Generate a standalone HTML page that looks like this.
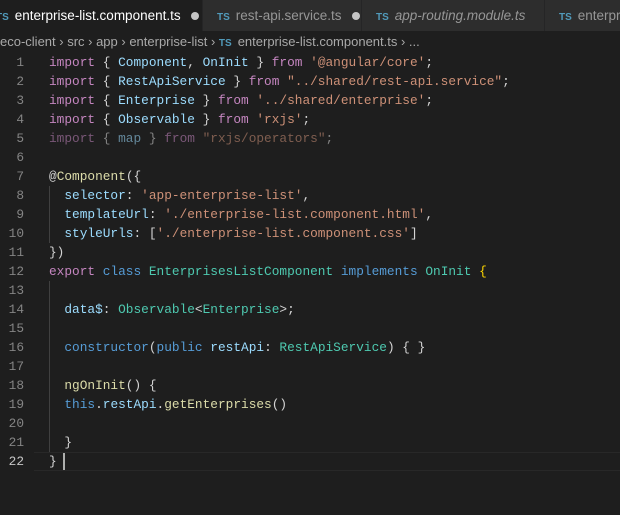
<!DOCTYPE html>
<html><head><meta charset="utf-8"><style>
body{margin:0;width:620px;height:515px;background:#1e1e1e;overflow:hidden;font-family:"Liberation Sans",sans-serif;}
.tabs{position:absolute;left:0;top:0;width:620px;height:31px;background:#252526;}
.tab{position:absolute;top:0;height:31px;background:#2d2d2d;color:#969696;font-size:13.5px;line-height:31px;white-space:nowrap;overflow:hidden;}
.tab.active{background:#1e1e1e;color:#fff;}
.ts{color:#519aba;font-size:10px;font-weight:bold;margin-right:6px;}
.dot{display:inline-block;width:8px;height:8px;border-radius:50%;background:#c5c5c5;margin-left:10px;vertical-align:0px;}
.bc{position:absolute;left:0;top:31px;height:22px;line-height:22px;color:#a9a9a9;font-size:13px;white-space:nowrap;}
.code{position:absolute;left:0;top:53px;font-family:"Liberation Mono",monospace;font-size:12.8px;}
.ln{position:relative;height:19px;line-height:19px;white-space:pre;}
.num{position:absolute;left:0;width:24px;text-align:right;color:#858585;}
.num.cur{color:#c6c6c6;}
.txt{position:absolute;left:49px;color:#d4d4d4;}
.k{color:#c586c0}.v{color:#9cdcfe}.s{color:#ce9178}.c{color:#4ec9b0}.b{color:#569cd6}.f{color:#dcdcaa}.y{color:#ffd700}
.dim{opacity:.55}
.guide{position:absolute;left:49px;width:1px;background:#404040;}
.curline{position:absolute;left:34px;right:0;top:452px;height:17px;border-top:1px solid #282828;border-bottom:1px solid #282828;}
.caret{position:absolute;left:63px;top:453px;width:2px;height:17px;background:#aeafad;}
</style></head><body>
<div class="tabs">
<div class="tab active" style="left:0;width:202px;"><span style="margin-left:-4px" class="ts">TS</span>enterprise-list.component.ts<span class="dot"></span></div>
<div class="tab" style="left:203px;width:158px;padding-left:14px;box-sizing:border-box"><span class="ts">TS</span>rest-api.service.ts<span class="dot"></span></div>
<div class="tab" style="left:362px;width:182px;padding-left:14px;box-sizing:border-box"><span class="ts">TS</span><i>app-routing.module.ts</i></div>
<div class="tab" style="left:545px;width:80px;padding-left:14px;box-sizing:border-box"><span class="ts">TS</span>enterprise-list</div>
</div>
<div class="bc">eco-client › src › app › enterprise-list › <span class="ts">TS</span>enterprise-list.component.ts › ...</div>
<div class="curline"></div>
<div class="guide" style="top:186px;height:57px"></div>
<div class="guide" style="top:281px;height:171px"></div>
<div class="caret"></div>
<div class="code">
<div class="ln"><span class="num">1</span><span class="txt"><span class="k">import</span> { <span class="v">Component</span>, <span class="v">OnInit</span> } <span class="k">from</span> <span class="s">'@angular/core'</span>;</span></div>
<div class="ln"><span class="num">2</span><span class="txt"><span class="k">import</span> { <span class="v">RestApiService</span> } <span class="k">from</span> <span class="s">"../shared/rest-api.service"</span>;</span></div>
<div class="ln"><span class="num">3</span><span class="txt"><span class="k">import</span> { <span class="v">Enterprise</span> } <span class="k">from</span> <span class="s">'../shared/enterprise'</span>;</span></div>
<div class="ln"><span class="num">4</span><span class="txt"><span class="k">import</span> { <span class="v">Observable</span> } <span class="k">from</span> <span class="s">'rxjs'</span>;</span></div>
<div class="ln"><span class="num">5</span><span class="txt dim"><span class="k">import</span> { <span class="v">map</span> } <span class="k">from</span> <span class="s">"rxjs/operators"</span>;</span></div>
<div class="ln"><span class="num">6</span></div>
<div class="ln"><span class="num">7</span><span class="txt">@<span class="f">Component</span>({</span></div>
<div class="ln"><span class="num">8</span><span class="txt">  <span class="v">selector</span>: <span class="s">'app-enterprise-list'</span>,</span></div>
<div class="ln"><span class="num">9</span><span class="txt">  <span class="v">templateUrl</span>: <span class="s">'./enterprise-list.component.html'</span>,</span></div>
<div class="ln"><span class="num">10</span><span class="txt">  <span class="v">styleUrls</span>: [<span class="s">'./enterprise-list.component.css'</span>]</span></div>
<div class="ln"><span class="num">11</span><span class="txt">})</span></div>
<div class="ln"><span class="num">12</span><span class="txt"><span class="k">export</span> <span class="b">class</span> <span class="c">EnterprisesListComponent</span> <span class="b">implements</span> <span class="c">OnInit</span> <span class="y">{</span></span></div>
<div class="ln"><span class="num">13</span></div>
<div class="ln"><span class="num">14</span><span class="txt">  <span class="v">data$</span>: <span class="c">Observable</span>&lt;<span class="c">Enterprise</span>&gt;;</span></div>
<div class="ln"><span class="num">15</span></div>
<div class="ln"><span class="num">16</span><span class="txt">  <span class="b">constructor</span>(<span class="b">public</span> <span class="v">restApi</span>: <span class="c">RestApiService</span>) { }</span></div>
<div class="ln"><span class="num">17</span></div>
<div class="ln"><span class="num">18</span><span class="txt">  <span class="f">ngOnInit</span>() {</span></div>
<div class="ln"><span class="num">19</span><span class="txt">  <span class="b">this</span>.<span class="v">restApi</span>.<span class="f">getEnterprises</span>()</span></div>
<div class="ln"><span class="num">20</span></div>
<div class="ln"><span class="num">21</span><span class="txt">  }</span></div>
<div class="ln"><span class="num cur">22</span><span class="txt">}</span></div>
</div>
</body></html>
